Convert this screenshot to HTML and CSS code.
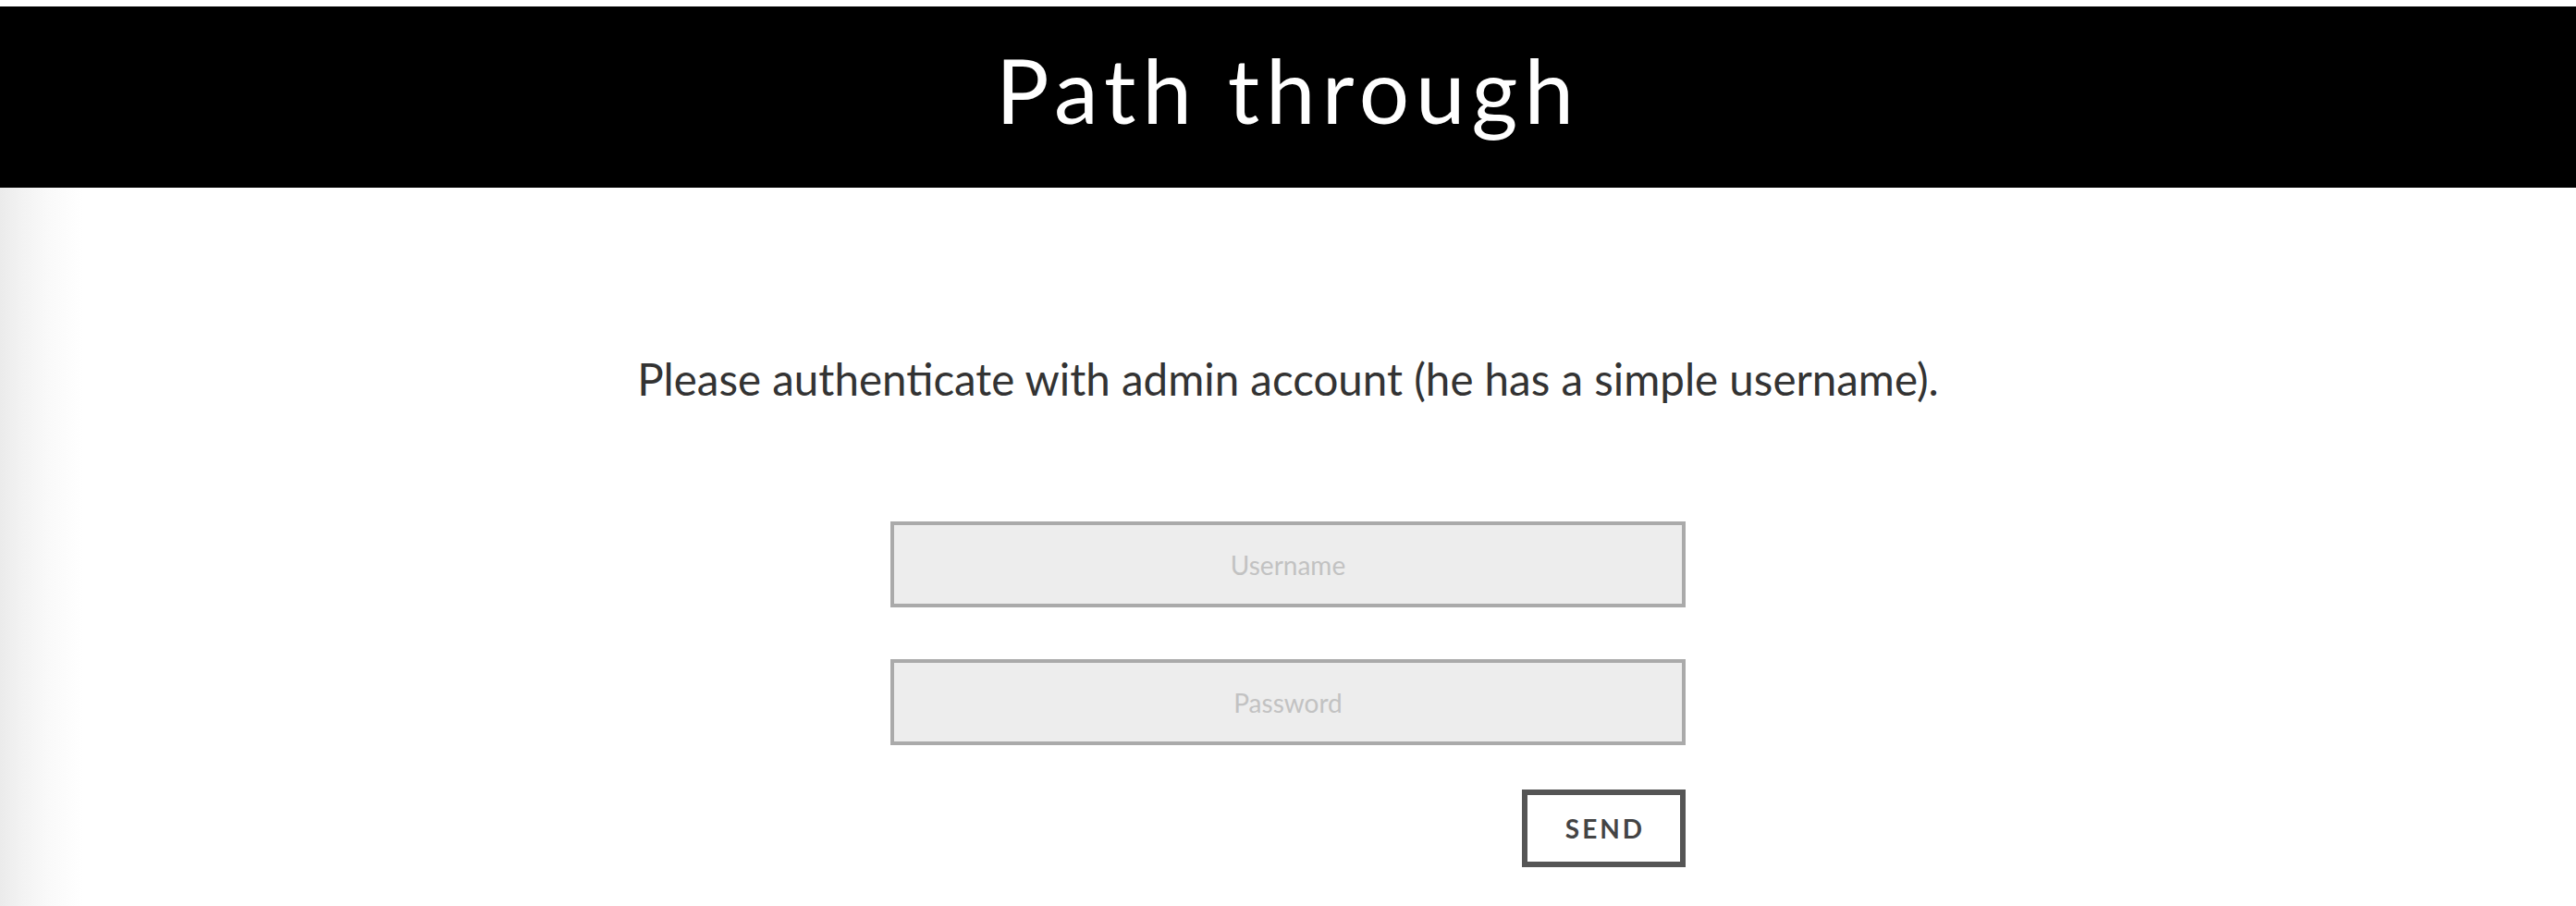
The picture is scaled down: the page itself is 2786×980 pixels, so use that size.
FILE: index.html
```html
<!DOCTYPE html>
<html lang="en">
<head>
<meta charset="utf-8">
<title>Path through</title>
<link rel="stylesheet" href="styles.css">
</head>
<body>
<header class="top">
  <h1 class="title">Path through</h1>
</header>
<main class="content">
  <p class="intro">Please authenticate with admin account (he has a simple username).</p>
  <form class="login">
    <input class="field" type="text" placeholder="Username">
    <input class="field" type="password" placeholder="Password">
    <button class="send" type="button">SEND</button>
  </form>
</main>
</body>
</html>
```
FILE: styles.css
```css
html, body {
  margin: 0;
  padding: 0;
  background: #fff;
}
body {
  padding-top: 7px;
  font-family: "Lato", "Liberation Sans", sans-serif;
  min-height: 973px;
  display: flex;
  flex-direction: column;
}
.top {
  background: #000;
  height: 196px;
  box-sizing: border-box;
  padding-top: 32px;
  display: flex;
  justify-content: center;
}
.title {
  margin: 0;
  color: #fff;
  font-family: "Lato", sans-serif;
  font-weight: 400;
  font-size: 96px;
  line-height: 1.2;
  letter-spacing: 7px;
}
.content {
  flex: 1;
  padding-top: 178px;
  background: linear-gradient(to right, #ebebeb 0px, #f3f3f3 25px, #fafafa 55px, #ffffff 90px);
}
.intro {
  margin: 0;
  text-align: center;
  color: #333;
  font-size: 47.5px;
  line-height: 1.2;
}
.login {
  width: 860px;
  margin: 126px auto 0;
  display: flex;
  flex-direction: column;
  gap: 56px;
}
.field {
  box-sizing: border-box;
  height: 93px;
  width: 100%;
  border: 4px solid #aaa;
  background: #ededed;
  font-family: "Lato", sans-serif;
  font-size: 28px;
  text-align: center;
  color: #555;
  outline: none;
  margin: 0;
  padding: 0;
}
.field::placeholder {
  color: #c2c2c2;
}
.send {
  align-self: flex-end;
  margin-top: -8px;
  box-sizing: border-box;
  width: 177px;
  height: 84px;
  border: 6px solid #555;
  background: #fff;
  color: #444;
  font-family: "Lato", sans-serif;
  font-weight: 700;
  font-size: 28px;
  letter-spacing: 3px;
  padding: 0 0 0 3px;
}
```
